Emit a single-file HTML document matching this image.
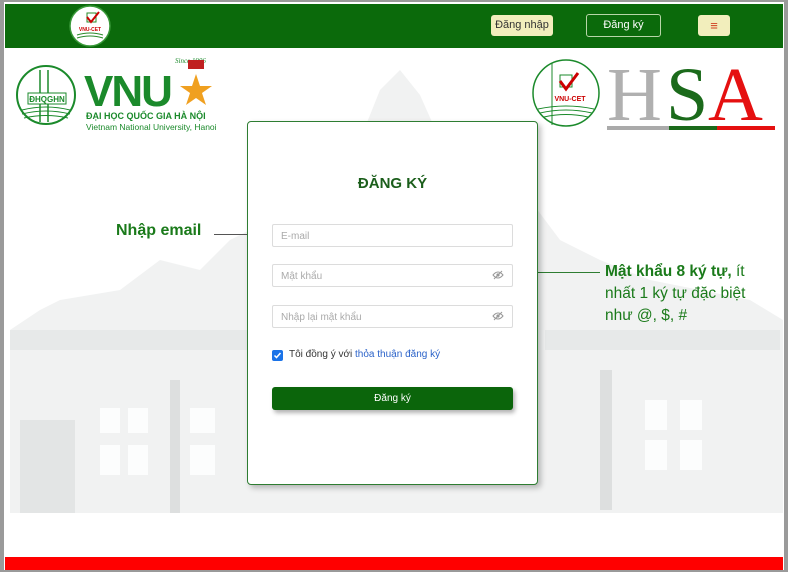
<!DOCTYPE html>
<html><head><meta charset="utf-8"><style>
*{margin:0;padding:0;box-sizing:border-box}
body{width:788px;height:572px;overflow:hidden;background:#fff;font-family:"Liberation Sans",sans-serif;position:relative}
.frame{position:absolute;left:0;top:0;width:788px;height:572px;border-style:solid;border-width:2px 4px 2px 4px;border-color:#9a9a9a}
.hdr{position:absolute;left:5px;top:4px;width:778px;height:44px;background:#0b6a0b}
.foot{position:absolute;left:5px;top:557px;width:778px;height:13px;background:#f00}
.btn{position:absolute;font-size:11px;text-align:center;border-radius:3px}
.card{position:absolute;left:247px;top:121px;width:291px;height:364px;background:#fff;border:1px solid #2e7d32;border-radius:4px;box-shadow:3px 3px 6px rgba(0,0,0,.25)}
.inp{position:absolute;left:24px;width:241px;height:23px;border:1px solid #dcdcdc;border-radius:2px;font-size:10px;color:#aaa;padding:6px 8px;background:#fff}
.eye{position:absolute;right:8px;top:5px}
.g{color:#1a7a1a}
</style></head><body>
<svg style="position:absolute;left:0;top:0" width="788" height="572">
<g fill="#dddfdf">
<path d="M10 520 L10 330 L40 310 L60 300 L120 290 L160 260 L200 270 L230 240 L250 230 L260 200 L300 180 L330 160 L360 140 L380 90 L400 70 L420 95 L440 140 L470 170 L530 200 L560 240 L600 260 L650 280 L700 290 L750 300 L783 320 L783 520 Z" opacity=".4"/>
<rect x="20" y="420" width="55" height="100" opacity=".7"/>
<rect x="10" y="330" width="240" height="20" opacity=".5"/>
<rect x="545" y="330" width="235" height="20" opacity=".5"/>
<rect x="170" y="380" width="10" height="135"/>
<rect x="600" y="370" width="12" height="140"/>
</g>
<g fill="#fff" opacity=".85">
<rect x="100" y="408" width="20" height="25"/><rect x="128" y="408" width="20" height="25"/>
<rect x="100" y="445" width="20" height="30"/><rect x="128" y="445" width="20" height="30"/>
<rect x="190" y="408" width="25" height="25"/><rect x="190" y="445" width="25" height="30"/>
<rect x="645" y="400" width="22" height="30"/><rect x="680" y="400" width="22" height="30"/>
<rect x="645" y="440" width="22" height="30"/><rect x="680" y="440" width="22" height="30"/>
</g>
<rect x="5" y="513" width="778" height="44" fill="#fff"/>
</svg>
<div class="hdr"></div>
<div class="foot"></div>
<div class="frame"></div>
<svg style="position:absolute;left:69px;top:5px" width="42" height="42"><circle cx="21" cy="21" r="20" fill="#fff" stroke="#3a9a3a" stroke-width="1.5"/><rect x="18" y="8" width="9" height="9" fill="none" stroke="#2a8a2a"/><path d="M18 12 l4 5 l8 -10" stroke="#c00" stroke-width="2" fill="none"/><text x="21" y="26" font-size="5" text-anchor="middle" fill="#c00" font-weight="bold">VNU-CET</text><path d="M8 30 q13 -4 26 0 M8 33 q13 -4 26 0" stroke="#2a8a2a" fill="none"/></svg>
<div class="btn" style="left:491px;top:15px;width:62px;height:21px;line-height:21px;background:#f2eebc;color:#333">Đăng nhập</div>
<div class="btn" style="left:586px;top:14px;width:75px;height:23px;line-height:21px;border:1px solid #b8d6a8;color:#fff">Đăng ký</div>
<div class="btn" style="left:698px;top:15px;width:32px;height:21px;line-height:21px;background:#f2eebc;color:#d04020;font-size:13px">≡</div>
<svg style="position:absolute;left:8px;top:56px" width="230" height="80">
<circle cx="38" cy="39" r="29" fill="none" stroke="#1b8a2b" stroke-width="2"/>
<path d="M32 14 v52 M40 14 v52" stroke="#1b8a2b" stroke-width="1.5"/>
<rect x="20" y="37" width="38" height="11" fill="#fff" stroke="#1b8a2b"/>
<text x="39" y="46" font-size="8" text-anchor="middle" fill="#1b8a2b" font-weight="bold">ĐHQGHN</text>
<path d="M14 54 q24 -6 48 0 M14 58 q24 -6 48 0 M16 62 q22 -5 44 0" stroke="#1b8a2b" fill="none"/>
<text x="76" y="50" font-size="44" font-weight="bold" fill="#1b8a2b" letter-spacing="-2">VNU</text>
<text x="167" y="7" font-size="7" font-style="italic" fill="#1b8a2b" font-family="Liberation Serif">Since 1906</text>
<rect x="180" y="4" width="16" height="9" fill="#c02020"/>
<polygon points="188,18 192,30 204,30 194,37 198,49 188,42 178,49 182,37 172,30 184,30" fill="#f0a020"/>
<text x="78" y="63" font-size="9" font-weight="bold" fill="#1b8a2b">ĐẠI HỌC QUỐC GIA HÀ NỘI</text>
<text x="78" y="74" font-size="8.5" fill="#1b8a2b">Vietnam National University, Hanoi</text>
</svg>
<svg style="position:absolute;left:530px;top:55px" width="250" height="80">
<circle cx="36" cy="38" r="33" fill="#fff" stroke="#1b8a2b" stroke-width="1.5"/>
<path d="M22 8 v62" stroke="#1b8a2b"/>
<rect x="30" y="20" width="12" height="12" fill="none" stroke="#1b8a2b"/>
<path d="M30 26 l6 8 l12 -16" stroke="#c00" stroke-width="3" fill="none"/>
<text x="40" y="46" font-size="7" text-anchor="middle" fill="#c00" font-weight="bold">VNU-CET</text>
<path d="M8 54 q28 -6 56 0 M10 58 q26 -6 52 0 M14 62 q22 -5 44 0" stroke="#1b8a2b" fill="none"/>
<text x="77" y="65" font-size="76" fill="#b0b0b0" font-family="Liberation Serif">H</text>
<text x="136" y="65" font-size="76" fill="#1b6a1b" font-family="Liberation Serif">S</text>
<text x="178" y="65" font-size="76" fill="#e51010" font-family="Liberation Serif">A</text>
<rect x="77" y="71" width="62" height="4" fill="#aaa"/><rect x="139" y="71" width="48" height="4" fill="#1b6a1b"/><rect x="187" y="71" width="58" height="4" fill="#e51010"/>
</svg>
<div class="g" style="position:absolute;left:116px;top:222px;font-size:16px;font-weight:bold">Nhập email</div>
<div style="position:absolute;left:214px;top:234px;width:58px;height:1px;background:#555"></div>
<div style="position:absolute;left:534px;top:272px;width:66px;height:1px;background:#2e7d32"></div>
<div class="g" style="position:absolute;left:605px;top:261px;font-size:15.5px;line-height:22px;width:170px"><b>Mật khẩu 8 ký tự,</b> ít nhất 1 ký tự đặc biệt như @, $, #</div>
<div class="card">
<div style="position:absolute;left:0;right:0;top:53px;text-align:center;font-size:15px;font-weight:bold;color:#1b5e1b">ĐĂNG KÝ</div>
<div class="inp" style="top:102px">E-mail</div>
<div class="inp" style="top:142px">Mật khẩu<svg class="eye" width="12" height="10"><path d="M1 5 q5 -6 10 0 q-5 6 -10 0z" fill="none" stroke="#999"/><circle cx="6" cy="5" r="1.6" fill="#999"/><path d="M2 9 L10 1" stroke="#999"/></svg></div>
<div class="inp" style="top:183px">Nhập lại mật khẩu<svg class="eye" width="12" height="10"><path d="M1 5 q5 -6 10 0 q-5 6 -10 0z" fill="none" stroke="#999"/><circle cx="6" cy="5" r="1.6" fill="#999"/><path d="M2 9 L10 1" stroke="#999"/></svg></div>
<div style="position:absolute;left:24px;top:228px;width:11px;height:11px;background:#1a73e8;border-radius:2px"><svg width="11" height="11" style="position:absolute;top:0;left:0"><path d="M2.5 5.5 l2 2 l4 -4.5" stroke="#fff" stroke-width="1.5" fill="none"/></svg></div>
<div style="position:absolute;left:41px;top:227px;font-size:10px;color:#333">Tôi đồng ý với <span style="color:#2a62c9">thỏa thuận đăng ký</span></div>
<div style="position:absolute;left:24px;top:265px;width:241px;height:23px;background:#0b650b;border-radius:3px;color:#fff;font-size:10px;text-align:center;padding-top:6px;box-shadow:2px 3px 4px rgba(0,0,0,.3)">Đăng ký</div>
</div>
</body></html>
